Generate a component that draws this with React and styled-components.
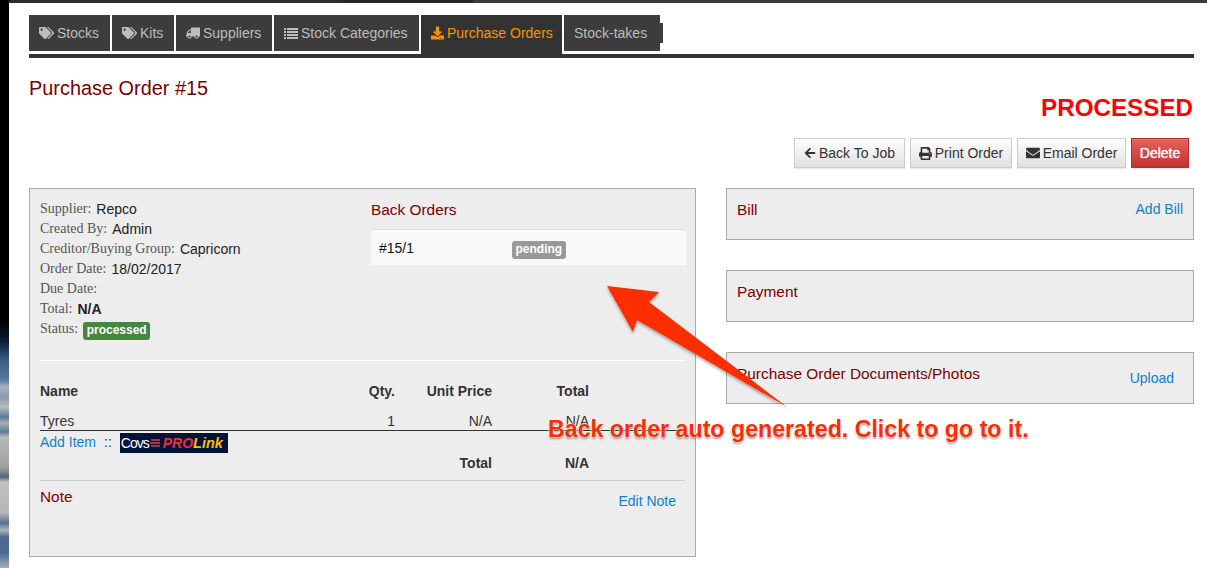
import React from "react";
import styled, { createGlobalStyle } from "styled-components";
import { FaTags, FaTruck, FaDownload, FaArrowLeft, FaPrint, FaEnvelope } from "react-icons/fa";

const GlobalStyle = createGlobalStyle`
  html, body { margin: 0; padding: 0; background: #fff; overflow: hidden; }
  body { font-family: "Liberation Sans", Arial, sans-serif; font-size: 14px; color: #333; }
`;

const Page = styled.div`
  position: relative;
  width: 1207px;
  height: 568px;
  overflow: hidden;
  display: flex;
  flex-direction: column;
`;
const TopBar = styled.div`
  height: 3px;
  flex: none;
  background: linear-gradient(to right, #000 0 9px, #2c2c2c 9px 343px, #262626 343px 473px, #3a3a3a 473px);
`;
const Body = styled.div`
  display: flex;
  flex: 1;
`;
const Wallpaper = styled.div`
  width: 9px;
  flex: none;
  background: linear-gradient(
    to bottom,
    #000 0,
    #000 317px,
    #0a1a30 337px,
    #3a5a88 357px,
    #5a7aa0 377px,
    #aab0bc 384px,
    #8a97aa 394px,
    #b8bcc0 404px,
    #5f7a9c 414px,
    #a8aeb4 420px,
    #5f7898 429px,
    #b5b8b8 434px,
    #a0a2a0 464px,
    #55647c 474px,
    #c0c2bf 479px,
    #b5b7b5 510px,
    #5a6f92 520px,
    #b0b5bb 527px,
    #4f6a90 534px,
    #4d6a92 550px,
    #a5adb8 565px
  );
`;
const Content = styled.div`
  flex: 1;
  padding: 12px 13px 0 20px;
`;

const Tabs = styled.div`
  display: flex;
  align-items: flex-start;
  gap: 2px;
  height: 39px;
`;
const Tab = styled.div`
  position: relative;
  box-sizing: border-box;
  width: ${(p) => p.$w}px;
  height: ${(p) => (p.$active ? "39px" : "36px")};
  padding-left: 10px;
  display: flex;
  align-items: flex-start;
  gap: 3px;
  line-height: 36px;
  background: ${(p) => (p.$active ? "#333" : "#3c3c3c")};
  color: ${(p) => (p.$active ? "#ff9000" : "#bdbdbd")};
  white-space: nowrap;
  svg { height: 36px; flex: none; }
`;
const TabNub = styled.span`
  position: absolute;
  left: 100%;
  top: 8px;
  width: 3px;
  height: 20px;
  background: #3c3c3c;
`;
const Rule = styled.div`
  height: 4px;
  background: #333;
`;

const Title = styled.h1`
  margin: 19px 0 0;
  font-size: 19.9px;
  font-weight: 400;
  line-height: 22px;
  color: #7a0000;
`;
const StatusText = styled.div`
  margin-top: -4px;
  padding-right: 1px;
  text-align: right;
  font-size: 24.2px;
  font-weight: 700;
  line-height: 26px;
  color: #f00;
`;
const Actions = styled.div`
  display: flex;
  justify-content: flex-end;
  gap: 5px;
  margin-top: 17px;
  padding-right: 5px;
`;
const Button = styled.div`
  width: ${(p) => p.$w}px;
  height: 30px;
  box-sizing: border-box;
  display: flex;
  align-items: center;
  justify-content: center;
  gap: 3px;
  border: 1px solid ${(p) => (p.$danger ? "#b92c28" : "#ccc")};
  background: ${(p) =>
    p.$danger
      ? "linear-gradient(to bottom, #e8605c, #c0322e)"
      : "linear-gradient(to bottom, #fff, #e0e0e0)"};
  color: ${(p) => (p.$danger ? "#fff" : "#333")};
  text-shadow: ${(p) => (p.$danger ? "0 0 1px #fff" : "none")};
  box-shadow: inset 0 1px 0 rgba(255, 255, 255, 0.15), 0 1px 1px rgba(0, 0, 0, 0.08);
`;

const Columns = styled.div`
  display: grid;
  grid-template-columns: 667px 468px;
  gap: 30px;
  margin-top: 20px;
  align-items: start;
`;
const Panel = styled.div`
  box-sizing: border-box;
  height: 369px;
  padding: 10px 10px 0;
  background: #ededed;
  border: 1px solid #aaa;
`;
const TopArea = styled.div`
  display: grid;
  grid-template-columns: 331px 315px;
  height: 161px;
`;
const BackOrders = styled.div`
  padding-top: 1px;
`;
const InfoRow = styled.div`
  height: 20px;
  line-height: 20px;
  display: flex;
  align-items: center;
  gap: 5px;
  color: #222;
`;
const InfoLabel = styled.span`
  font-family: "Liberation Serif", "Times New Roman", serif;
  color: #555;
  font-size: 14px;
`;
const Badge = styled.span`
  display: inline-block;
  padding: 0 3.5px;
  height: 18px;
  margin-top: ${(p) => p.$mt || 0}px;
  line-height: 17px;
  border-radius: 3px;
  background: ${(p) => p.$bg};
  color: #fff;
  font-size: 12px;
  font-weight: 700;
`;
const SectionTitle = styled.div`
  font-size: 15.4px;
  line-height: 20px;
  color: #7a0000;
`;
const BackOrderRow = styled.div`
  display: grid;
  grid-template-columns: 133px 1fr;
  align-items: center;
  height: 36px;
  margin-top: 9px;
  padding-left: 8px;
  background: #f9f9f9;
  border-top: 1px solid #ddd;
  box-sizing: border-box;
  color: #111;
`;
const Divider = styled.div`
  height: 1px;
  margin-top: ${(p) => p.$mt || 0}px;
  background: ${(p) => p.$color};
`;
const ItemGrid = styled.div`
  display: grid;
  grid-template-columns: 258px 97px 97px 97px 97px;
  box-sizing: border-box;
  height: ${(p) => p.$h}px;
  margin-top: ${(p) => p.$mt || 0}px;
  padding-top: ${(p) => p.$pt || 0}px;
  line-height: 20px;
  font-weight: ${(p) => (p.$bold ? 700 : 400)};
  border-bottom: ${(p) => (p.$line ? "1px solid #333" : "none")};
  color: #333;
`;
const Num = styled.div`
  text-align: right;
`;
const AddRow = styled.div`
  display: flex;
  align-items: flex-start;
  gap: 8px;
  height: 22px;
  box-sizing: border-box;
  padding-top: 1px;
  line-height: 20px;
`;
const Link = styled.span`
  color: #0d80cf;
`;
const Logo = styled.div`
  width: 108px;
  height: 20px;
  margin-top: 1px;
  box-sizing: border-box;
  padding-left: 1px;
  display: flex;
  align-items: center;
  background: #021338;
  line-height: 20px;
  white-space: nowrap;
  overflow: hidden;
  svg { flex: none; margin: 0 2px 0 1px; }
`;
const LogoCovs = styled.span`
  color: #fff;
  font-size: 14px;
  letter-spacing: -1px;
`;
const LogoWord = styled.span`
  color: ${(p) => p.$color};
  font-style: italic;
  font-weight: 700;
  font-size: ${(p) => p.$size}px;
`;
const NoteRow = styled.div`
  display: flex;
  justify-content: space-between;
  padding: 6px 9px 0 0;
`;
const Side = styled.div`
  display: flex;
  flex-direction: column;
  gap: 30px;
`;
const SideCard = styled.div`
  box-sizing: border-box;
  height: 52px;
  padding: 11px ${(p) => p.$pr}px 0 10px;
  background: #ededed;
  border: 1px solid #aaa;
  display: flex;
  justify-content: space-between;
  align-items: flex-start;
  line-height: 20px;
`;
const CardLink = styled(Link)`
  margin-top: ${(p) => p.$mt || 0}px;
`;

const Overlay = styled.svg`
  position: absolute;
  left: 0;
  top: 0;
  pointer-events: none;
`;
const Callout = styled.div`
  position: absolute;
  left: 548px;
  top: 416px;
  font-size: 23.2px;
  line-height: 26px;
  font-weight: 700;
  color: #ff2a00;
  white-space: nowrap;
  text-shadow: 0 0 2px #fff, 0 0 2px #fff, 0 2px 2px rgba(0, 0, 0, 0.4);
`;

const ListIcon = () => (
  <svg width="14" viewBox="0 0 14 12" fill="currentColor">
    <path d="M0 1h2v2H0zM3 1h11v2H3zM0 4h2v2H0zM3 4h11v2H3zM0 7h2v2H0zM3 7h11v2H3zM0 10h2v2H0zM3 10h11v2H3z" />
  </svg>
);

const tabs = [
  { icon: <FaTags size={15} />, label: "Stocks", w: 81 },
  { icon: <FaTags size={15} />, label: "Kits", w: 62 },
  { icon: <FaTruck size={14} style={{ transform: "scaleX(-1)" }} />, label: "Suppliers", w: 96 },
  { icon: <ListIcon />, label: "Stock Categories", w: 145 },
  { icon: <FaDownload size={13} />, label: "Purchase Orders", w: 141, active: true },
  { label: "Stock-takes", w: 96, nub: true },
];

const info = [
  ["Supplier:", "Repco"],
  ["Created By:", "Admin"],
  ["Creditor/Buying Group:", "Capricorn"],
  ["Order Date:", "18/02/2017"],
  ["Due Date:", ""],
  ["Total:", <b key="t">N/A</b>],
  ["Status:", <Badge key="s" $bg="#43883f" $mt={4}>processed</Badge>],
];

export default function App() {
  return (
    <Page>
      <GlobalStyle />
      <TopBar />
      <Body>
        <Wallpaper />
        <Content>
          <Tabs>
            {tabs.map((t) => (
              <Tab key={t.label} $active={t.active} $w={t.w}>
                {t.icon}
                {t.label}
                {t.nub ? <TabNub /> : null}
              </Tab>
            ))}
          </Tabs>
          <Rule />
          <Title>Purchase Order #15</Title>
          <StatusText>PROCESSED</StatusText>
          <Actions>
            <Button $w={111}><FaArrowLeft size={12} />Back To Job</Button>
            <Button $w={102}><FaPrint size={13} />Print Order</Button>
            <Button $w={109}><FaEnvelope size={14} />Email Order</Button>
            <Button $w={58} $danger>Delete</Button>
          </Actions>
          <Columns>
            <Panel>
              <TopArea>
                <div>
                  {info.map(([label, value]) => (
                    <InfoRow key={label}>
                      <InfoLabel>{label}</InfoLabel>
                      {value}
                    </InfoRow>
                  ))}
                </div>
                <BackOrders>
                  <SectionTitle>Back Orders</SectionTitle>
                  <BackOrderRow>
                    <span>#15/1</span>
                    <span><Badge $bg="#999" $mt={4}>pending</Badge></span>
                  </BackOrderRow>
                </BackOrders>
              </TopArea>
              <Divider $color="#fff" />
              <ItemGrid $h={20} $mt={20} $bold>
                <div>Name</div>
                <Num>Qty.</Num>
                <Num>Unit Price</Num>
                <Num>Total</Num>
              </ItemGrid>
              <ItemGrid $h={21} $mt={9} $pt={1} $line>
                <div>Tyres</div>
                <Num>1</Num>
                <Num>N/A</Num>
                <Num>N/A</Num>
              </ItemGrid>
              <AddRow>
                <Link>Add Item</Link>
                <span>::</span>
                <Logo>
                  <LogoCovs>Covs</LogoCovs>
                  <svg width="11" height="10" viewBox="0 0 11 10">
                    <path d="M1 2h9M0 5h10M1 8h9" stroke="#d8434f" strokeWidth="1.6" fill="none" />
                  </svg>
                  <LogoWord $color="#ee2b3e" $size={14}>PRO</LogoWord>
                  <LogoWord $color="#f5bd0c" $size={14.5}>Link</LogoWord>
                </Logo>
              </AddRow>
              <ItemGrid $h={20} $bold>
                <div />
                <div />
                <Num>Total</Num>
                <Num>N/A</Num>
              </ItemGrid>
              <Divider $color="#ccc" $mt={7} />
              <NoteRow>
                <SectionTitle>Note</SectionTitle>
                <CardLink $mt={6}>Edit Note</CardLink>
              </NoteRow>
            </Panel>
            <Side>
              <SideCard $pr={10}>
                <SectionTitle>Bill</SectionTitle>
                <CardLink $mt={-1}>Add Bill</CardLink>
              </SideCard>
              <SideCard $pr={10}>
                <SectionTitle>Payment</SectionTitle>
              </SideCard>
              <SideCard $pr={19}>
                <SectionTitle>Purchase Order Documents/Photos</SectionTitle>
                <CardLink $mt={4}>Upload</CardLink>
              </SideCard>
            </Side>
          </Columns>
        </Content>
      </Body>
      <Overlay width="1207" height="568" viewBox="0 0 1207 568">
        <defs>
          <filter id="arrowShadow" x="-10%" y="-10%" width="120%" height="120%">
            <feDropShadow dx="0" dy="2" stdDeviation="1.5" floodColor="#000" floodOpacity="0.35" />
          </filter>
        </defs>
        <polygon
          points="607,286 659,292 649,302 787,407 637,320 633,332"
          fill="#ff2d00"
          filter="url(#arrowShadow)"
        />
      </Overlay>
      <Callout>Back order auto generated. Click to go to it.</Callout>
    </Page>
  );
}
